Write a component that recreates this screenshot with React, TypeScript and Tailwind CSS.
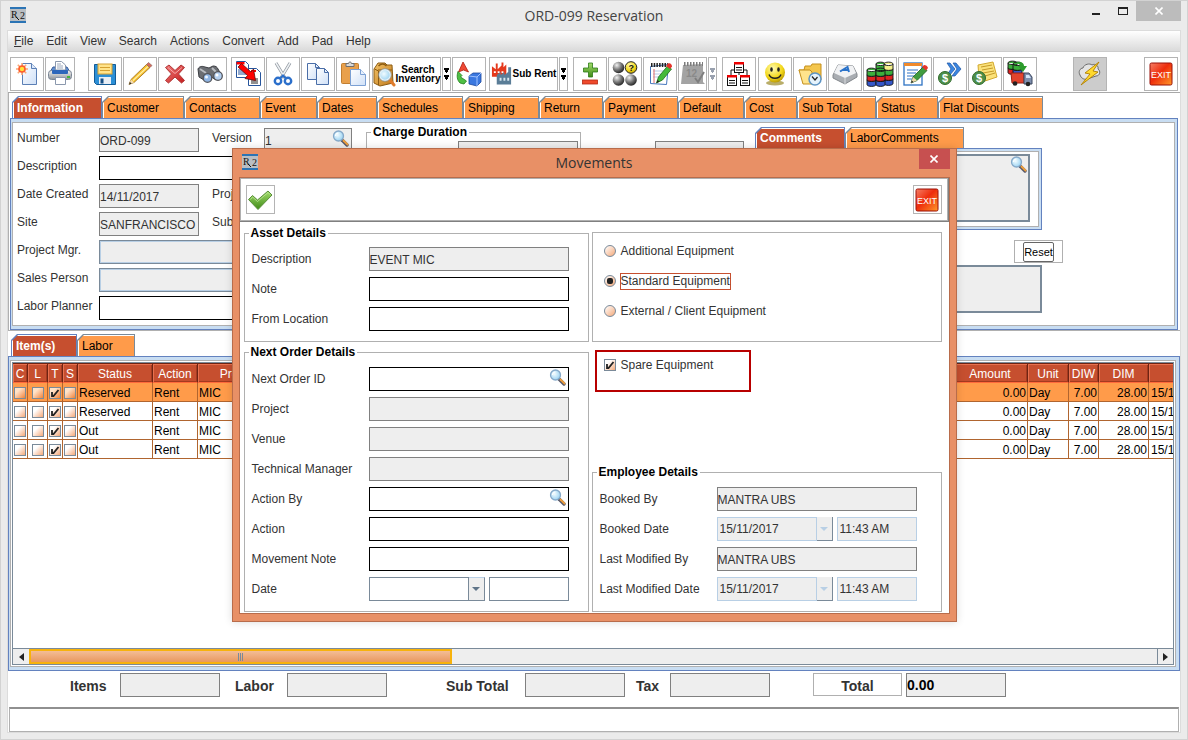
import React, { useState } from 'react';

type Tab = { name: string; width: string };

const mainTabs: Tab[] = [
  { name: 'Information', width: 'w-[90px]' },
  { name: 'Customer', width: 'w-[82px]' },
  { name: 'Contacts', width: 'w-[76px]' },
  { name: 'Event', width: 'w-[57px]' },
  { name: 'Dates', width: 'w-[60px]' },
  { name: 'Schedules', width: 'w-[86px]' },
  { name: 'Shipping', width: 'w-[76px]' },
  { name: 'Return', width: 'w-[64px]' },
  { name: 'Payment', width: 'w-[75px]' },
  { name: 'Default', width: 'w-[66px]' },
  { name: 'Cost', width: 'w-[53px]' },
  { name: 'Sub Total', width: 'w-[79px]' },
  { name: 'Status', width: 'w-[62px]' },
  { name: 'Flat Discounts', width: 'w-[105px]' },
];

const commentTabs: Tab[] = [
  { name: 'Comments', width: 'w-[90px]' },
  { name: 'LaborComments', width: 'w-[119px]' },
];

const itemTabs: Tab[] = [
  { name: 'Item(s)', width: 'w-[66px]' },
  { name: 'Labor', width: 'w-[58px]' },
];

const menus = ['Edit', 'View', 'Search', 'Actions', 'Convert', 'Add', 'Pad', 'Help'];

const columns = [
  { name: 'C', width: 'w-[15px]' },
  { name: 'L', width: 'w-[20px]' },
  { name: 'T', width: 'w-[15px]' },
  { name: 'S', width: 'w-[15px]' },
  { name: 'Status', width: 'w-[75px]' },
  { name: 'Action', width: 'w-[45px]' },
  { name: 'Product', width: 'w-[86px]' },
  { name: '', width: 'w-[669px]' },
  { name: 'Amount', width: 'w-[75px]' },
  { name: 'Unit', width: 'w-[41px]' },
  { name: 'DIW', width: 'w-[30px]' },
  { name: 'DIM', width: 'w-[50px]' },
  { name: '', width: 'w-[141px]' },
];

const rows = [
  { status: 'Reserved', selected: true },
  { status: 'Reserved', selected: false },
  { status: 'Out', selected: false },
  { status: 'Out', selected: false },
];

/* ---------- icons ---------- */

function Defs() {
  return (
    <svg className="absolute size-0" aria-hidden="true">
      <defs>
        <linearGradient id="paper" x1="0" y1="0" x2="1" y2="1">
          <stop offset="0" stopColor="#fff" />
          <stop offset="1" stopColor="#cfe0f7" />
        </linearGradient>
        <linearGradient id="wood" x1="0" y1="0" x2="1" y2="1">
          <stop offset="0" stopColor="#f3c267" />
          <stop offset="1" stopColor="#c07a1c" />
        </linearGradient>
        <linearGradient id="steel" x1="0" y1="0" x2="0" y2="1">
          <stop offset="0" stopColor="#f4f4f4" />
          <stop offset="1" stopColor="#8f9499" />
        </linearGradient>
        <radialGradient id="ball" cx="0.35" cy="0.3" r="0.8">
          <stop offset="0" stopColor="#f2f2f2" />
          <stop offset="0.5" stopColor="#777" />
          <stop offset="1" stopColor="#111" />
        </radialGradient>
        <radialGradient id="gold" cx="0.4" cy="0.3" r="0.8">
          <stop offset="0" stopColor="#fffbb0" />
          <stop offset="0.6" stopColor="#f2d616" />
          <stop offset="1" stopColor="#a58300" />
        </radialGradient>
        <radialGradient id="lens" cx="0.4" cy="0.4" r="0.7">
          <stop offset="0" stopColor="#f2fcff" />
          <stop offset="1" stopColor="#8fcdf0" />
        </radialGradient>
        <linearGradient id="cross" x1="0" y1="0" x2="1" y2="1">
          <stop offset="0" stopColor="#f07878" />
          <stop offset="1" stopColor="#c41c1c" />
        </linearGradient>
        <linearGradient id="leaf" x1="0" y1="0" x2="0" y2="1">
          <stop offset="0" stopColor="#a3dd6c" />
          <stop offset="1" stopColor="#3f8a17" />
        </linearGradient>
        <linearGradient id="exitbg" x1="0" y1="0" x2="1" y2="1">
          <stop offset="0" stopColor="#f57f67" />
          <stop offset="0.45" stopColor="#ee2c0c" />
          <stop offset="1" stopColor="#ff9a28" />
        </linearGradient>
      </defs>
    </svg>
  );
}

function Icon({ children, className = 'size-8' }: { children: React.ReactNode; className?: string }) {
  return (
    <svg viewBox="0 0 32 32" className={`${className} shrink-0`} fill="none" aria-hidden="true">
      {children}
    </svg>
  );
}

function LogoIcon() {
  return (
    <svg viewBox="0 0 16 16" className="size-4" aria-hidden="true">
      <rect width="16" height="16" fill="#b9bec3" />
      <rect width="16" height="2" fill="#2b74b5" />
      <rect y="14" width="16" height="2" fill="#2b74b5" />
      <text x="1" y="11" fontSize="10" fontFamily="Liberation Serif, serif" fill="#111">R</text>
      <text x="10" y="12" fontSize="10" fontFamily="Liberation Serif, serif" fill="#111">2</text>
      <path d="M6 10l3 3" stroke="#111" />
    </svg>
  );
}

function Magnifier({ className }: { className: string }) {
  return (
    <svg viewBox="0 0 17 17" className={`size-[17px] ${className}`} fill="none" aria-hidden="true">
      <path d="M10 10l5 5" stroke="#5b5b6b" strokeWidth="3.4" strokeLinecap="round" />
      <path d="M11.5 10.500l4 4" stroke="#f0a03c" strokeWidth="1.800" strokeLinecap="round" />
      <circle cx="6.500" cy="6" r="5" fill="url(#lens)" stroke="#86a9c9" strokeWidth="1.300" />
      <path d="M3.500 6a3 3 0 0 1 3-3" stroke="#fff" strokeWidth="1.200" />
    </svg>
  );
}

function NewIcon() {
  return (
    <Icon>
      <path d="M11.500 5.500h9l5 5v16h-14z" fill="url(#paper)" stroke="#5b7fb5" />
      <path d="M20.500 5.500v5h5" fill="#dbe8fa" stroke="#5b7fb5" />
      <path d="M11 5v12M5 11h12M6.800 6.800l8.400 8.400M15.200 6.800l-8.400 8.400" stroke="#f9a878" strokeWidth="1.600" />
      <circle cx="11" cy="11" r="3.800" fill="#ff5a2a" />
      <circle cx="11" cy="11" r="2.200" fill="#ffe23c" />
    </Icon>
  );
}

function PrintIcon() {
  return (
    <svg viewBox="0 0 28 32" className="h-8 w-7 shrink-0" fill="none" aria-hidden="true">
      <path d="M4 14l3-5h14l3 5z" fill="#5f8fd0" stroke="#3c5f9c" />
      <path d="M9.500 12V3.500h6l4 3.500v5z" fill="#fff" stroke="#8b98ad" />
      <path d="M11 6h4M11 8h6M11 10h6" stroke="#9aa7bb" />
      <rect x="2.500" y="12.500" width="23" height="9" rx="3" fill="url(#steel)" stroke="#7b8695" />
      <rect x="6" y="12" width="16" height="4" rx="1" fill="#2d67bb" />
      <path d="M21 19h3" stroke="#46b93a" strokeWidth="2" />
      <path d="M9.500 19.500h10v7h-10z" fill="#fff" stroke="#8b98ad" />
    </svg>
  );
}

function SaveIcon() {
  return (
    <Icon>
      <path d="M5.500 6.500h21v20h-19l-2-2z" fill="#2b8fd6" stroke="#135b96" />
      <rect x="9" y="6" width="14" height="10" fill="#ffe38a" stroke="#d6a132" />
      <path d="M11 9.500h10M11 12.500h10" stroke="#d6a132" />
      <rect x="10" y="19" width="12" height="7" fill="#e8eef5" />
      <rect x="11.500" y="20.500" width="3" height="5" fill="#174f85" />
    </Icon>
  );
}

function PencilIcon() {
  return (
    <Icon>
      <path d="M5 26.500l2-5L22.500 6.500l3.500 3L10 24.500z" fill="#f7c12f" stroke="#9b6a15" strokeWidth=".8" />
      <path d="M9 22.500L24 8.500" stroke="#fff0a8" strokeWidth="1.200" />
      <path d="M22.500 6.500l2-2 3.500 3-2 2z" fill="#d8695c" stroke="#8c6b63" strokeWidth=".7" />
      <path d="M5 26.500l2-5 3 3z" fill="#f3dcb4" />
      <path d="M5 26.500l.9-2.600 1.700 1.500z" fill="#222" />
    </Icon>
  );
}

function DeleteIcon() {
  return (
    <Icon>
      <path d="M6.500 9.500L10 7l6 5.500L22 7l3.500 2.500L19.500 16l6 6.500-3 2.500-6.500-6-6.500 6-3-2.500 6-6.500z" fill="url(#cross)" stroke="#b03434" strokeLinejoin="round" />
      <path d="M9 9.500l7 6 7-6" stroke="#f7a9a9" />
    </Icon>
  );
}

function BinocularsIcon() {
  return (
    <Icon>
      <path d="M4 11c1-3 5-3 7-2l4 1 4-2c3 0 4 1 5 3l4 7-6 4-6-4-3 1-3 3-5-3z" fill="#6b6e73" stroke="#3b3d42" />
      <path d="M6 11l6 4M18 10l5 5" stroke="#b9bcc1" strokeWidth="2" />
      <circle cx="13.500" cy="20" r="4.300" fill="#8fb5e4" stroke="#54565c" strokeWidth="1.300" />
      <circle cx="24" cy="18" r="4.300" fill="#b5d1f2" stroke="#54565c" strokeWidth="1.300" />
      <circle cx="12.500" cy="19" r="1.500" fill="#eef6ff" />
      <circle cx="23" cy="17" r="1.500" fill="#fff" />
    </Icon>
  );
}

function ConvertIcon() {
  return (
    <Icon>
      <path d="M4.500 3.500h9l3 3v13h-12z" fill="#fff" stroke="#27559c" />
      <path d="M4.500 4h8v2.500h-8z" fill="#f00" />
      <path d="M6 12h8M6 14h8M6 16h8" stroke="#27559c" />
      <path d="M16.500 10.500h8l4 4v13h-12z" fill="#fff" stroke="#27559c" />
      <path d="M19 12h5v2h-5z" fill="#f00" />
      <path d="M19 21h7M19 23h7M19 25h7" stroke="#222" />
      <path d="M6 9l3.500-3.500 9.500 8.500 2.500-3 2 11.500-10.500-2 2.500-3z" fill="#f00" stroke="#5d0b0b" strokeWidth=".8" />
    </Icon>
  );
}

function CutIcon() {
  return (
    <Icon>
      <path d="M9 5l9 15M23 5l-9 15" stroke="#8e959d" strokeWidth="3" />
      <path d="M9 5l9 15M23 5l-9 15" stroke="#eef1f4" strokeWidth="1.500" />
      <circle cx="11" cy="23" r="3.200" stroke="#2b6fcb" strokeWidth="2.400" />
      <circle cx="21" cy="23" r="3.200" stroke="#2b6fcb" strokeWidth="2.400" />
      <path d="M13 20.500l3-3 3 3" stroke="#2b6fcb" strokeWidth="2" />
    </Icon>
  );
}

function CopyIcon() {
  return (
    <Icon>
      <path d="M5.500 5.500h8l4 4v12h-12z" fill="url(#paper)" stroke="#4a6ea8" />
      <path d="M13.500 5.500v4h4" stroke="#4a6ea8" />
      <path d="M14.500 10.500h8l4 4v12h-12z" fill="url(#paper)" stroke="#4a6ea8" />
      <path d="M22.500 10.500v4h4" stroke="#4a6ea8" />
    </Icon>
  );
}

function PasteIcon() {
  return (
    <Icon>
      <rect x="4.500" y="5.500" width="17" height="20" rx="1" fill="#e9a04b" stroke="#c27f31" />
      <path d="M9 8.500v-3h2.500c0-2 3-2 3 0H17v3z" fill="#d9d9d9" stroke="#6e6e6e" />
      <path d="M13.500 11.500h10l5 5v11h-15z" fill="url(#paper)" stroke="#7ba0d4" />
      <path d="M23.500 11.500v5h5" fill="#e8f1fd" stroke="#7ba0d4" />
    </Icon>
  );
}

function InventoryIcon() {
  return (
    <svg viewBox="0 0 23 32" className="h-8 w-[23px] shrink-0" fill="none" aria-hidden="true">
      <path d="M1 11l4-6h7l2 2 5 0 1 18-13 3-6-3z" fill="url(#wood)" stroke="#8d5c12" />
      <path d="M5 12h14M1.500 11l4 2v14" stroke="#8d5c12" />
      <path d="M5.500 8c3-3 6-2 8 0" stroke="#8d5c12" strokeWidth="1.500" />
      <path d="M16 21l5 6" stroke="#e07c2c" strokeWidth="3" strokeLinecap="round" />
      <circle cx="12" cy="17" r="5.500" fill="url(#lens)" stroke="#e9f2f7" strokeWidth="1.500" />
      <circle cx="12" cy="17" r="6.300" stroke="#7d8f9c" strokeWidth=".7" />
    </svg>
  );
}

function ShapesIcon() {
  return (
    <Icon>
      <path d="M10 4l5.500 10-5-2-5 2z" fill="#ef4a34" stroke="#ad1d10" strokeWidth=".8" />
      <path d="M5 13.500l4 4-1.500 1.500 6 4-2.500 3-4-1c-3-3-3.500-7-2-11.500z" fill="#4fbf45" stroke="#1f7d1b" strokeWidth=".8" />
      <path d="M16 18l4-3h8v9l-4 4-8-2z" fill="#3a78e0" stroke="#1d479c" strokeWidth=".8" />
      <path d="M16 18l8 1 4-4M24 19v9" stroke="#9fc2ff" />
    </Icon>
  );
}

function FactoryIcon() {
  return (
    <svg viewBox="0 0 23 32" className="h-8 w-[22px] shrink-0" fill="none" aria-hidden="true">
      <path d="M1 19V8l4 3V5h2v6l4-4V4h2v5l3-3v13z" fill="#e5391c" />
      <path d="M3 13h2v2H3zM7 13h2v2H7zM11 13h2v2h-2z" fill="#fff" />
      <path d="M6 27V17l4-3v3l4-3v3l4-3V9h3v18z" fill="#5a7d97" />
      <path d="M9 20h2v3H9zM13 20h2v3h-2zM17 20h2v3h-2z" fill="#d9e7f0" />
    </svg>
  );
}

function PlusMinusIcon() {
  return (
    <Icon>
      <path d="M14.500 5h4v5h5v4h-5v5h-4v-5h-5v-4h5z" fill="url(#leaf)" stroke="#2c7a16" strokeWidth=".8" />
      <rect x="8.500" y="22" width="15" height="4" fill="#ef4a2c" stroke="#b52a14" strokeWidth=".8" />
    </Icon>
  );
}

function BallsIcon() {
  return (
    <Icon>
      <circle cx="9.500" cy="9.500" r="5.800" fill="url(#ball)" />
      <circle cx="22" cy="9.500" r="5.800" fill="url(#gold)" stroke="#222" />
      <circle cx="9.500" cy="22" r="5.800" fill="url(#ball)" />
      <circle cx="22" cy="22" r="5.800" fill="url(#ball)" />
      <text x="19.500" y="13" fontSize="9" fontWeight="bold" fill="#111">?</text>
    </Icon>
  );
}

function NotepadIcon() {
  return (
    <Icon>
      <path d="M6.500 8.500l18-2-2 20-16-1z" fill="#fff" stroke="#4777bd" />
      <path d="M9 13h11M9 16h10M9 19h8" stroke="#b6cbe6" />
      <path d="M10 11v14" stroke="#e06a6a" />
      <path d="M7 7h17" stroke="#222" strokeWidth="4" strokeDasharray="1.500 1.200" />
      <path d="M12.500 25l2-6 9-11 4 3-9 11z" fill="#44b93a" stroke="#20701b" strokeWidth=".8" />
      <path d="M22 8l2-2.500c2-1 4 .5 4 3l-2 2.500z" fill="#e5332a" />
      <path d="M12.500 25l1-3 2 1.500z" fill="#222" />
    </Icon>
  );
}

function CalendarIcon() {
  return (
    <svg viewBox="0 0 28 32" className="h-8 w-7 shrink-0" fill="none" aria-hidden="true">
      <path d="M4 7l20-1v18l2 2H2z" fill="#a3a3a3" />
      <path d="M5 6h19" stroke="#7c7c7c" strokeWidth="4" strokeDasharray="1.500 1.500" />
      <text x="7" y="19" fontSize="10" fontWeight="bold" fill="#8a8a8a">12</text>
      <path d="M16 20l3 4 6-10" stroke="#7e7e7e" strokeWidth="2" />
    </svg>
  );
}

function OrgIcon() {
  return (
    <Icon>
      <path d="M16 14v3M8 17v-5h16v5" stroke="#111" />
      {[[11, 4], [4, 17], [17, 17]].map(([x, y]) => (
        <g key={`${x}-${y}`}>
          <rect x={x + 0.5} y={y + 0.5} width="9" height="10" fill="#fff" stroke="#111" />
          <rect x={x} y={y} width="10" height="2.500" fill="#e00" />
          <path d={`M${x + 2} ${y + 5.5}h6M${x + 2} ${y + 8}h6`} stroke="#111" />
        </g>
      ))}
    </Icon>
  );
}

function SmileIcon() {
  return (
    <Icon>
      <ellipse cx="16" cy="25" rx="9" ry="2.500" fill="#9b8a2a" opacity=".7" />
      <circle cx="16" cy="14.500" r="10" fill="url(#gold)" />
      <ellipse cx="12.500" cy="11.500" rx="1.300" ry="2.200" fill="#222" />
      <ellipse cx="19.500" cy="11.500" rx="1.300" ry="2.200" fill="#222" />
      <path d="M10 16.500c2 5 10 5 12 0" stroke="#222" strokeWidth="1.500" />
    </Icon>
  );
}

function FolderClockIcon() {
  return (
    <Icon>
      <path d="M5 12h5l1-4h6l1-2h9v16l-14 3z" fill="#f4c64e" stroke="#c48f1c" />
      <path d="M5 12h11l2 2v12H9z" fill="#ffe48c" stroke="#c48f1c" />
      <circle cx="21" cy="21" r="6" fill="#e5f3fd" stroke="#5d94c4" strokeWidth="1.500" />
      <path d="M18 18.500l3 3.500 2.500-3" stroke="#222" strokeWidth="1.200" />
    </Icon>
  );
}

function KeyIcon() {
  return (
    <Icon>
      <path d="M4 17L9 7l15 1 4 8v3l-12 7-12-6z" fill="#a9adb2" stroke="#84888d" />
      <path d="M9 7l15 1 3 7-11 5L5 15z" fill="#f1f2f4" />
      <path d="M16 20v6" stroke="#d9dbde" />
      <path d="M11 13.500l7.500-4.500 1.500 5M14 12h5" stroke="#2a72c9" strokeWidth="2" />
    </Icon>
  );
}

function Stack({ x, y, colors }: { x: number; y: number; colors: string[] }) {
  return (
    <g stroke="#111" strokeWidth=".9">
      {[...colors].reverse().map((c, i) => {
        const top = y + (colors.length - 1 - i) * 5;
        return <path key={i} d={`M${x} ${top}c0-2.500 9-2.500 9 0v4.500c0 2.500-9 2.500-9 0zM${x} ${top}c0 2 9 2 9 0`} fill={c} />;
      })}
    </g>
  );
}

function StacksIcon() {
  return (
    <Icon>
      <Stack x={12} y={6} colors={['#3cae3c', '#3cae3c', '#3457c9', '#888']} />
      <Stack x={20} y={6} colors={['#f4f08c', '#3cae3c', '#d22', '#3457c9']} />
      <Stack x={3} y={12} colors={['#3cae3c', '#d22', '#3457c9']} />
      <Stack x={12} y={12} colors={['#3cae3c', '#d22', '#3457c9']} />
    </Icon>
  );
}

function EditDocIcon() {
  return (
    <Icon>
      <rect x="5" y="5" width="18" height="22" fill="#fff" stroke="#2f73c4" strokeWidth="1.300" />
      <rect x="5" y="5" width="18" height="3" fill="#f08a2c" />
      <path d="M8 12h11M8 15h9M8 18h7M8 21h5" stroke="#2f73c4" />
      <path d="M12 25l2-6 10-10 4 3.500-10 10z" fill="#3f9c3f" stroke="#1d5d1d" strokeWidth=".8" />
      <path d="M23 9l2-2c2 0 3.500 1 4 3l-2 2.500z" fill="#e5332a" />
      <path d="M12 25l2-6 4 3.500z" fill="#f1d7a9" />
      <path d="M12 25l.8-2.400 1.700 1.400z" fill="#222" />
    </Icon>
  );
}

function Dollar({ cx, cy }: { cx: number; cy: number }) {
  return (
    <>
      <circle cx={cx} cy={cy} r="6.500" fill="#4f8f4a" stroke="#2f6b2c" />
      <text x={cx} y={cy + 4} fontSize="11" fontWeight="bold" fill="#fff" textAnchor="middle">$</text>
    </>
  );
}

function DollarNextIcon() {
  return (
    <Icon>
      <path d="M13 5h3l5 6-6 7h-3l5-7z" fill="#3b86e0" stroke="#1c55a3" strokeWidth=".7" />
      <path d="M19 5h3l5 6-6 7h-3l5-7z" fill="#3b86e0" stroke="#1c55a3" strokeWidth=".7" />
      <Dollar cx={11} cy={20} />
    </Icon>
  );
}

function DollarNoteIcon() {
  return (
    <Icon>
      <path d="M9 7l15-3 4 15-12 4-6-3z" fill="#fbe27a" stroke="#d2a92f" />
      <path d="M12 9l11-2M13 12l11-2M14 15l11-2M16 18l10-3" stroke="#c49a2a" />
      <Dollar cx={10} cy={20} />
    </Icon>
  );
}

function TruckIcon() {
  return (
    <Icon>
      <Stack x={4} y={5} colors={['#3cae3c', '#d22']} />
      <Stack x={9} y={6} colors={['#3cae3c', '#3457c9']} />
      <path d="M12 4c5-1 8 1 8 4h3l-4 6-5-6h2c0-2-2-3-4-4z" fill="#2c9c2c" />
      <path d="M7 15h13v10H8z" fill="#e2432d" stroke="#9d2112" />
      <path d="M20 15h5l3 4v7h-8z" fill="#7f8fae" stroke="#3d4860" />
      <path d="M22 17h3l2 3h-5z" fill="#d4e4f7" />
      <circle cx="11" cy="25.500" r="2.300" fill="#222" />
      <circle cx="24" cy="26" r="2.300" fill="#222" />
    </Icon>
  );
}

function LightningIcon() {
  return (
    <Icon>
      <path d="M6 17c-2-3 0-7 3-7 1-4 7-5 9-3 3-2 7 1 6 4 3 2 2 7-2 7l-9 3c-3 1-6-1-7-4z" fill="#e4e4e4" stroke="#6d6d6d" />
      <path d="M25 4L11 15l5 1-9 11 17-13-5-1z" fill="#ffd92e" stroke="#b07e00" strokeWidth=".9" />
    </Icon>
  );
}

function ExitIcon() {
  return (
    <svg viewBox="0 0 24 24" className="size-6 shrink-0" fill="none" aria-hidden="true">
      <rect x="1" y="1" width="22" height="22" rx="1.500" fill="url(#exitbg)" stroke="#9a1008" />
      <text x="12" y="16" fontSize="9" fill="#fff" textAnchor="middle" fontFamily="Liberation Sans, sans-serif">EXIT</text>
    </svg>
  );
}

function CheckIcon() {
  return (
    <svg viewBox="0 0 26 26" className="size-[26px]" fill="none" aria-hidden="true">
      <path d="M1.500 12.500L5.500 8.500l5 4.500L21 4l4 4L11 22.500z" fill="url(#leaf)" stroke="#5a8f3a" strokeLinejoin="round" />
      <path d="M3.500 12.500L5.500 10l5 4.500L21 5.500l2 2" stroke="#c4ec9f" opacity=".7" />
    </svg>
  );
}

/* ---------- controls ---------- */

function ToolButton({ label, children, className = 'w-[34px]' }: { label: string; children: React.ReactNode; className?: string }) {
  return (
    <button
      type="button"
      aria-label={label}
      className={`flex h-[34px] shrink-0 items-center justify-center border border-[#b4b4b4] ${className}`}
    >
      {children}
    </button>
  );
}

function DropButton({ label, muted }: { label: string; muted?: boolean }) {
  return (
    <ToolButton label={label} className="w-[9px]">
      <svg viewBox="0 0 7 14" className={`h-[14px] w-[7px] shrink-0 ${muted ? 'fill-gray-400' : 'fill-black'}`} aria-hidden="true">
        <path d="M1 1h5v2H5v2H4v1H3V5H2V3H1zM1 8h5v2H5v2H4v1H3v-1H2v-2H1z" />
      </svg>
    </ToolButton>
  );
}

function Tabs({ tabs, height = 'h-[22px]' }: { tabs: Tab[]; height?: string }) {
  const [active, setActive] = useState(tabs[0].name);

  return (
    <div className="flex" role="tablist">
      {tabs.map((tab) => {
        const selected = tab.name === active;
        return (
          <button
            key={tab.name}
            type="button"
            role="tab"
            aria-selected={selected}
            onClick={() => setActive(tab.name)}
            className={`${tab.width} ${height} shrink-0 pt-px pl-px pr-px [clip-path:polygon(6px_0,100%_0,100%_100%,0_100%,0_6px)] ${selected ? 'bg-[#6382bf]' : 'bg-[#7a8a99]'}`}
          >
            <span
              className={`flex h-full items-center pl-1 whitespace-nowrap shadow-[inset_1px_1px_0_#ffffff] [clip-path:polygon(6px_0,100%_0,100%_100%,0_100%,0_6px)] ${selected ? 'bg-[#c64f2f] font-bold text-white' : 'bg-[#ff9b4a] text-black'}`}
            >
              {tab.name}
            </span>
          </button>
        );
      })}
    </div>
  );
}

const fieldStyles = {
  edit: 'border-black bg-white',
  readonly: 'border-[#808080] bg-[#eeeeee]',
  combo: 'border-[#7a8a99] bg-[#eeeeee] shadow-[inset_0_0_0_1px_#b8cfe5]',
};

const infoLabel = 'w-[82px] leading-5';
const infoLabel2 = 'w-[52px] leading-5';
const dialogLabel = 'w-[117px] leading-6';

type FieldProps = {
  id: string;
  label: string;
  value?: string;
  kind?: keyof typeof fieldStyles;
  labelClass?: string;
  width?: string;
  search?: boolean;
};

function Field({ id, label, value = '', kind = 'edit', labelClass = dialogLabel, width = 'w-[200px]', search }: FieldProps) {
  return (
    <div className={`flex items-start ${width === 'flex-1' ? 'flex-1' : ''}`}>
      <label htmlFor={id} className={`${labelClass} shrink-0 whitespace-nowrap`}>{label}</label>
      <div className={`relative ${width}`}>
        <input
          id={id}
          defaultValue={value}
          readOnly={kind !== 'edit'}
          className={`block h-6 w-full border pt-px outline-none ${fieldStyles[kind]}`}
        />
        {search && <Magnifier className="absolute top-[2px] right-[3px]" />}
      </div>
    </div>
  );
}

function DateField({ id, label, date = '', time = '', disabled }: { id: string; label: string; date?: string; time?: string; disabled?: boolean }) {
  const look = disabled ? 'border-[#b8cfe5] bg-[#eeeeee]' : 'border-[#7a8a99] bg-white';

  return (
    <div className="flex items-start">
      <label htmlFor={id} className={`${dialogLabel} shrink-0`}>{label}</label>
      <div className="flex w-[200px]">
        <input id={id} defaultValue={date} readOnly={disabled} className={`h-6 w-[100px] border pl-[2px] outline-none ${look}`} />
        <button
          type="button"
          aria-label={`${label} calendar`}
          className={`flex h-6 w-4 items-center justify-center border-r border-b border-[#7a8a99] bg-[#eeeeee] ${disabled ? 'text-[#b8cfe5]' : 'border-t border-t-[#b8cfe5] text-[#5f7488]'}`}
        >
          <svg viewBox="0 0 8 4" className="h-1 w-2 fill-current" aria-hidden="true"><path d="M0 0h8L4 4z" /></svg>
        </button>
        <input aria-label={`${label} time`} defaultValue={time} readOnly={disabled} className={`ml-1 h-6 w-20 border pl-[2px] outline-none ${look}`} />
      </div>
    </div>
  );
}

function CheckBox({ id, label, checked }: { id?: string; label?: string; checked: boolean }) {
  return (
    <span className="inline-grid place-items-center align-middle">
      <input
        id={id}
        type="checkbox"
        aria-label={label}
        defaultChecked={checked}
        className="peer col-start-1 row-start-1 size-3 appearance-none border border-[#7a8a99] bg-linear-to-br from-white from-30% to-[#f2a878]"
      />
      <svg viewBox="0 0 10 10" className="pointer-events-none invisible col-start-1 row-start-1 size-[10px] peer-checked:visible" fill="none" aria-hidden="true">
        <path d="M2 4v4h1.500L8.500 2" stroke="#222" strokeWidth="1.800" />
      </svg>
    </span>
  );
}

function Radio({ label, focused }: { label: string; focused?: boolean }) {
  return (
    <label className="flex h-[30px] items-center gap-1">
      <input
        type="radio"
        name="equipment"
        defaultChecked={focused}
        className="grid size-3 appearance-none place-items-center rounded-full border border-[#7a8a99] bg-linear-to-br from-white to-[#f2a878] before:size-[6px] before:rounded-[2px] checked:before:bg-[#222222]"
      />
      <span className={`border leading-[15px] ${focused ? 'border-[#c64f2f]' : 'border-transparent'}`}>{label}</span>
    </label>
  );
}

function Group({ title, children, className = '' }: { title: string; children: React.ReactNode; className?: string }) {
  return (
    <fieldset className="min-w-0 border border-[#b0b0b0]">
      <legend className="ml-1 px-[2px] leading-[14px] font-bold text-black">{title}</legend>
      <div className={className}>{children}</div>
    </fieldset>
  );
}

/* ---------- window parts ---------- */

function TitleBar() {
  return (
    <header className="grid h-[29px] shrink-0 grid-cols-[1fr_auto_1fr] items-start">
      <div className="pt-[6px] pl-[3px]"><LogoIcon /></div>
      <h1 className="pt-[5px] font-['Open_Sans',sans-serif] text-[14px] leading-[20px] text-[#444444]">ORD-099 Reservation</h1>
      <div className="flex items-start justify-end">
        <button type="button" aria-label="Minimize" className="flex h-5 w-[26px] justify-center pt-3">
          <span className="h-[2px] w-2 bg-[#222222]" />
        </button>
        <button type="button" aria-label="Maximize" className="flex h-5 w-[27px] justify-center pt-[6px]">
          <span className="h-2 w-[10px] border border-t-2 border-[#222222]" />
        </button>
        <button type="button" aria-label="Close" className="flex h-5 w-[45px] items-center justify-center bg-[#bcbcbc]">
          <svg viewBox="0 0 8 8" className="size-2" aria-hidden="true"><path d="M0.500 0.500l7 7M7.500 0.500l-7 7" stroke="#fff" strokeWidth="1.600" /></svg>
        </button>
      </div>
    </header>
  );
}

function Toolbar() {
  return (
    <div className="flex shrink-0 gap-px border-b border-[#a8a8a8] px-[2px] pt-[5px] pb-px" role="toolbar">
      <ToolButton label="New"><NewIcon /></ToolButton>
      <ToolButton label="Print" className="mr-3 w-[30px]"><PrintIcon /></ToolButton>
      <ToolButton label="Save"><SaveIcon /></ToolButton>
      <ToolButton label="Edit"><PencilIcon /></ToolButton>
      <ToolButton label="Delete"><DeleteIcon /></ToolButton>
      <ToolButton label="Find" className="mr-[3px] w-[34px]"><BinocularsIcon /></ToolButton>
      <ToolButton label="Convert"><ConvertIcon /></ToolButton>
      <ToolButton label="Cut"><CutIcon /></ToolButton>
      <ToolButton label="Copy"><CopyIcon /></ToolButton>
      <ToolButton label="Paste" className="mr-px w-[34px]"><PasteIcon /></ToolButton>
      <ToolButton label="Search Inventory" className="w-[69px]">
        <InventoryIcon />
        <span className="text-center text-[10px] leading-[9px] font-bold text-black">Search Inventory</span>
      </ToolButton>
      <DropButton label="Search Inventory options" />
      <ToolButton label="Exchange" className="mr-[2px] w-[34px]"><ShapesIcon /></ToolButton>
      <ToolButton label="Sub Rent" className="w-[69px]">
        <FactoryIcon />
        <span className="text-[10px] font-bold whitespace-nowrap text-black">Sub Rent</span>
      </ToolButton>
      <DropButton label="Sub Rent options" />
      <ToolButton label="Add or remove" className="ml-1 w-[34px]"><PlusMinusIcon /></ToolButton>
      <ToolButton label="Availability"><BallsIcon /></ToolButton>
      <ToolButton label="Notes"><NotepadIcon /></ToolButton>
      <ToolButton label="Calendar" className="w-[29px]"><CalendarIcon /></ToolButton>
      <DropButton label="Calendar options" muted />
      <ToolButton label="Structure" className="ml-1 w-[34px]"><OrgIcon /></ToolButton>
      <ToolButton label="Crew" className="ml-px w-[34px]"><SmileIcon /></ToolButton>
      <ToolButton label="History"><FolderClockIcon /></ToolButton>
      <ToolButton label="Shortcut"><KeyIcon /></ToolButton>
      <ToolButton label="Stock"><StacksIcon /></ToolButton>
      <ToolButton label="Edit document"><EditDocIcon /></ToolButton>
      <ToolButton label="Next payment"><DollarNextIcon /></ToolButton>
      <ToolButton label="Invoice"><DollarNoteIcon /></ToolButton>
      <ToolButton label="Delivery"><TruckIcon /></ToolButton>
      <ToolButton label="Quick action" className="ml-[35px] w-[34px] border-[#999999] bg-[#cccccc]"><LightningIcon /></ToolButton>
      <ToolButton label="Exit" className="ml-auto w-[34px]"><ExitIcon /></ToolButton>
    </div>
  );
}

function InformationPanel() {
  return (
    <section className="shrink-0 border-b border-l border-[#b0b0b0] pt-[3px] pr-[2px] pl-px">
      <div className="pl-[2px]"><Tabs tabs={mainTabs} /></div>
      <div className="border border-[#6382bf] bg-[#c8ddf2] pt-[3px] pr-[2px] pb-[3px] pl-px">
        <div className="flex overflow-hidden border border-[#b0b0b0] bg-white pb-px pl-1">
          <div className="w-[335px] shrink-0 pt-[5px]">
            <div className="flex h-7 gap-[13px]">
              <Field id="number" label="Number" value="ORD-099" kind="readonly" labelClass={infoLabel} width="w-[100px]" />
              <Field id="version" label="Version" value="1" kind="readonly" labelClass={infoLabel2} width="w-[88px]" search />
            </div>
            <div className="flex h-7"><Field id="description" label="Description" labelClass={infoLabel} width="flex-1" /></div>
            <div className="flex h-7 gap-[13px]">
              <Field id="created" label="Date Created" value="14/11/2017" kind="readonly" labelClass={infoLabel} width="w-[100px]" />
              <Field id="project" label="Project" kind="readonly" labelClass={infoLabel2} width="w-[88px]" />
            </div>
            <div className="flex h-7 gap-[13px]">
              <Field id="site" label="Site" value="SANFRANCISCO" kind="readonly" labelClass={infoLabel} width="w-[100px]" />
              <Field id="subsite" label="Sub Site" kind="readonly" labelClass={infoLabel2} width="w-[88px]" />
            </div>
            <div className="flex h-7"><Field id="manager" label="Project Mgr." kind="combo" labelClass={infoLabel} width="flex-1" /></div>
            <div className="flex h-7"><Field id="sales" label="Sales Person" kind="combo" labelClass={infoLabel} width="flex-1" /></div>
            <div className="flex h-7"><Field id="planner" label="Labor Planner" labelClass={infoLabel} width="flex-1" /></div>
          </div>

          <div className="ml-[14px] flex w-[378px] shrink-0 items-start justify-between pt-[2px]">
            <Group title="Charge Duration" className="w-[213px] pt-[2px] pb-2 pl-1">
              <Field id="start" label="Start Date/Time" kind="readonly" labelClass="w-[87px] leading-6" width="w-[120px]" />
            </Group>
            <input aria-label="Duration" readOnly className="mt-4 h-6 w-[89px] border border-[#808080] bg-[#eeeeee]" />
          </div>

          <div className="ml-[11px] w-[308px] shrink-0 pt-1">
            <Tabs tabs={commentTabs} height="h-[21px]" />
            <div className="mr-[21px] border border-[#6382bf] bg-[#c8ddf2] p-[2px]">
              <div className="relative border border-[#b0b0b0] bg-white pt-[2px] pr-2 pb-1 pl-1">
                <textarea aria-label="Comments" readOnly className="block h-[68px] w-full resize-none border-2 border-[#7a8a99] bg-[#eeeeee]" />
                <Magnifier className="absolute top-1 right-[11px]" />
              </div>
            </div>
            <div className="flex justify-end pt-[10px] pb-[2px]">
              <button type="button" className="h-[23px] w-[49px] border border-[#b0b0b0] px-[8px] text-[11px] text-black">
                <span className="flex h-5 items-center justify-center rounded-[2px] border border-[#666666]">Reset</span>
              </button>
            </div>
            <textarea aria-label="Notes" readOnly className="block h-12 w-[287px] resize-none border-2 border-[#7a8a99] bg-[#eeeeee]" />
          </div>
        </div>
      </div>
    </section>
  );
}

function ItemsTable() {
  return (
    <table className="w-[1277px] table-fixed border-separate border-spacing-0 text-black">
      <thead>
        <tr>
          {columns.map((col, i) => (
            <th
              key={i}
              className={`${col.width} h-5 overflow-hidden border-t border-r border-b border-t-[#6e2413] border-r-[#6e2413] border-b-[#ff6a3c] bg-[#c64f2f] p-0 pt-px font-normal text-white shadow-[inset_1px_1px_0_#e8714f,inset_-1px_-1px_0_#a43a20]`}
            >
              {col.name}
            </th>
          ))}
        </tr>
      </thead>
      <tbody className="[&_td]:h-[19px] [&_td]:overflow-hidden [&_td]:border-r [&_td]:border-b [&_td]:border-[#b0652f] [&_td]:p-0 [&_td]:px-px [&_td]:pt-px [&_td]:leading-4 [&_td]:whitespace-nowrap">
        {rows.map((row, i) => (
          <tr key={i} className={row.selected ? 'bg-[#ff9b4a] [&_input]:from-[#ffe2c8] [&_input]:to-[#f0822f]' : 'bg-white'}>
            {['C', 'L', 'T', 'S'].map((name) => (
              <td key={name}>
                <div className="flex justify-center">
                  <CheckBox label={`${name} row ${i + 1}`} checked={name === 'T'} />
                </div>
              </td>
            ))}
            <td>{row.status}</td>
            <td>Rent</td>
            <td>MIC</td>
            <td />
            <td className="text-right">0.00</td>
            <td>Day</td>
            <td className="text-right">7.00</td>
            <td className="text-right">28.00</td>
            <td><span className="pl-px">15/11/2017</span></td>
          </tr>
        ))}
      </tbody>
    </table>
  );
}

function ItemsPanel() {
  return (
    <section className="flex min-h-0 flex-1 flex-col pt-[3px]">
      <div className="pl-[3px]"><Tabs tabs={itemTabs} /></div>
      <div className="flex flex-1 flex-col border border-[#6382bf] bg-[#c8ddf2] pt-[3px] pr-[3px] pb-[3px] pl-px">
        <div className="flex flex-1 flex-col border border-[#b0b0b0] bg-white p-px">
          <div className="flex flex-1 flex-col border border-[#7a8a99]">
            <div className="w-0 min-w-full flex-1 overflow-hidden"><ItemsTable /></div>
            <div className="flex h-4 border-t border-[#7a8a99] bg-[#eeeeee]">
              <button type="button" aria-label="Scroll left" className="flex w-4 items-center justify-center">
                <svg viewBox="0 0 5 8" className="h-2 w-[5px]" aria-hidden="true"><path d="M5 0v8L0 4z" fill="#222" /></svg>
              </button>
              <div className="flex flex-1">
                <div className="flex w-[37.5%] items-center justify-center gap-px border-2 border-[#f7b20c] bg-linear-to-b from-[#f3bd96] to-[#e8985e]">
                  <span className="h-2 w-px bg-[#7a8a99]" />
                  <span className="h-2 w-px bg-[#7a8a99]" />
                  <span className="h-2 w-px bg-[#7a8a99]" />
                </div>
              </div>
              <button type="button" aria-label="Scroll right" className="flex w-4 items-center justify-center border-l border-[#7a8a99]">
                <svg viewBox="0 0 5 8" className="h-2 w-[5px]" aria-hidden="true"><path d="M0 0v8l5-4z" fill="#222" /></svg>
              </button>
            </div>
          </div>
        </div>
      </div>
    </section>
  );
}

function Totals() {
  const box = 'h-6 w-[100px] border border-[#808080] bg-[#eeeeee] outline-none';

  return (
    <footer className="shrink-0">
      <div className="flex h-9 items-start pt-[2px] text-[14px] font-bold text-[#333333]">
        <label htmlFor="items" className="ml-[62px] w-[50px] leading-[26px]">Items</label>
        <input id="items" readOnly className={box} />
        <label htmlFor="labor" className="ml-[15px] w-[52px] leading-[26px]">Labor</label>
        <input id="labor" readOnly className={box} />
        <label htmlFor="subtotal" className="ml-[59px] w-[79px] leading-[26px]">Sub Total</label>
        <input id="subtotal" readOnly className={box} />
        <label htmlFor="tax" className="ml-[11px] w-[34px] leading-[26px]">Tax</label>
        <input id="tax" readOnly className={box} />
        <button type="button" className="mr-1 ml-[43px] h-[23px] w-[89px] border border-[#b0b0b0] leading-[24px]">Total</button>
        <input aria-label="Total" readOnly value="0.00" className={`${box} text-black`} />
      </div>
      <div className="mx-px h-[25px] border border-t-2 border-[#b0b0b0] border-t-[#909090]" />
    </footer>
  );
}

function MovementsDialog() {
  return (
    <div className="absolute inset-x-0 top-[147px] flex justify-center">
      <div role="dialog" aria-labelledby="movements" className="w-[725px] shrink-0 border border-[#b86c4b] bg-[#e89066] px-[6px] pb-[7px] shadow-[0_0_8px_rgba(0,0,0,0.15)]">
        <div className="grid h-7 grid-cols-[1fr_auto_1fr] items-start">
          <div className="pt-[5px] pl-[3px]"><LogoIcon /></div>
          <h2 id="movements" className="pt-1 font-['Open_Sans',sans-serif] text-[14px] leading-[20px] text-[#333333]">Movements</h2>
          <div className="flex justify-end">
            <button type="button" aria-label="Close Movements" className="flex h-5 w-[31px] items-center justify-center bg-[#c75050]">
              <svg viewBox="0 0 8 8" className="size-2" aria-hidden="true"><path d="M0.500 0.500l7 7M7.500 0.500l-7 7" stroke="#fff" strokeWidth="1.600" /></svg>
            </button>
          </div>
        </div>

        <div className="border border-[#b86c4b] bg-white">
          <div className="border-r border-b border-[#808080]">
            <div className="flex justify-between border border-[#b0b0b0] px-[5px] pt-[6px] pb-[6px]">
              <button type="button" aria-label="Confirm" className="flex size-[29px] items-center justify-center border border-[#b4b4b4]"><CheckIcon /></button>
              <button type="button" aria-label="Exit Movements" className="flex size-[29px] items-center justify-center border border-[#b4b4b4]"><ExitIcon /></button>
            </div>
          </div>

          <div className="flex gap-[3px] px-1 pt-1 pb-px">
            <div className="flex w-[345px] flex-col gap-[3px]">
              <Group title="Asset Details" className="flex flex-col gap-[6px] pt-[7px] pb-[10px] pl-[7px]">
                <Field id="asset" label="Description" value="EVENT MIC" kind="readonly" />
                <Field id="note" label="Note" />
                <Field id="from" label="From Location" />
              </Group>
              <Group title="Next Order Details" className="flex flex-col gap-[6px] pt-2 pb-[10px] pl-[7px]">
                <Field id="nextorder" label="Next Order ID" search />
                <Field id="nextproject" label="Project" kind="readonly" />
                <Field id="venue" label="Venue" kind="readonly" />
                <Field id="techmanager" label="Technical Manager" kind="readonly" />
                <Field id="actionby" label="Action By" search />
                <Field id="action" label="Action" />
                <Field id="movementnote" label="Movement Note" />
                <DateField id="date" label="Date" />
              </Group>
            </div>

            <div className="flex w-[350px] flex-col pt-[6px]">
              <div className="h-[110px] border border-[#b0b0b0] pt-[3px] pl-[11px]">
                <Radio label="Additional Equipment" />
                <Radio label="Standard Equipment" focused />
                <Radio label="External / Client Equipment" />
              </div>
              <div className="mt-2 ml-[3px] h-[42px] w-[156px] border-2 border-[#b80000] pt-[5px] pl-[7px]">
                <label className="flex items-center gap-[5px]">
                  <CheckBox id="spare" checked />
                  Spare Equipment
                </label>
              </div>
              <div className="mt-auto">
                <Group title="Employee Details" className="flex flex-col gap-[6px] pt-2 pb-[10px] pl-[7px]">
                  <Field id="bookedby" label="Booked By" value="MANTRA UBS" kind="readonly" />
                  <DateField id="bookeddate" label="Booked Date" date="15/11/2017" time="11:43 AM" disabled />
                  <Field id="modifiedby" label="Last Modified By" value="MANTRA UBS" kind="readonly" />
                  <DateField id="modifieddate" label="Last Modified Date" date="15/11/2017" time="11:43 AM" disabled />
                </Group>
              </div>
            </div>
          </div>
        </div>
      </div>
    </div>
  );
}

export default function App() {
  return (
    <div className="relative flex min-h-screen flex-col overflow-hidden border border-[#d2d2d2] bg-[#ebebeb] px-[6px] pb-[6px] font-['Liberation_Sans',sans-serif] text-[12px] leading-4 text-[#333333]">
      <Defs />
      <TitleBar />
      <main className="flex flex-1 flex-col border border-[#dcdcdc] bg-white">
        <nav className="flex h-[21px] shrink-0 items-center gap-[13px] border-b border-[#cccccc] bg-linear-to-b from-white to-[#dadada] pl-[6px]">
          <button type="button"><span className="underline">F</span>ile</button>
          {menus.map((menu) => (
            <button key={menu} type="button">{menu}</button>
          ))}
        </nav>
        <Toolbar />
        <InformationPanel />
        <ItemsPanel />
        <Totals />
      </main>
      <MovementsDialog />
    </div>
  );
}
